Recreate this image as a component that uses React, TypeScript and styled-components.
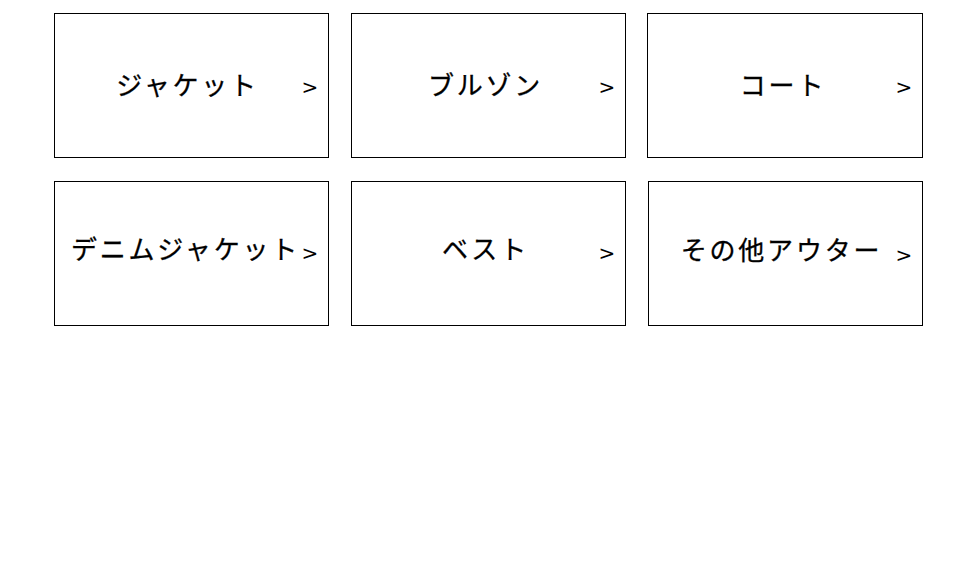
import React from "react";
import styled, { createGlobalStyle } from "styled-components";

const Global = createGlobalStyle`
  html, body { margin: 0; padding: 0; background: #fff; }
  body { font-family: "Noto Sans CJK JP", "Noto Sans", sans-serif; color: #000; }
`;

const Grid = styled.div`
  display: grid;
  grid-template-columns: repeat(3, 275px);
  grid-auto-rows: 145px;
  column-gap: 22px;
  row-gap: 23px;
  padding: 13px 0 0 54px;
`;

const Card = styled.a<{ $dx?: number }>`
  position: relative;
  display: flex;
  align-items: center;
  justify-content: center;
  box-sizing: border-box;
  border: 1px solid #000;
  background: #fff;
  color: #000;
  text-decoration: none;
  margin-left: ${(p) => p.$dx ?? 0}px;
`;

const Label = styled.span<{ $lift: number; $dx: number }>`
  font-family: "Noto Sans CJK JP", sans-serif;
  font-size: 26px;
  font-weight: 400;
  letter-spacing: 2.8px;
  line-height: 1;
  white-space: nowrap;
  -webkit-text-stroke: 0.3px #000;
  transform: translate(${(p) => p.$dx}px, ${(p) => -p.$lift}px);
`;

const Arrow = styled.span<{ $dy: number }>`
  position: absolute;
  right: 10px;
  top: 50%;
  transform: translateY(calc(-50% + ${(p) => p.$dy}px)) scaleX(1.05);
  font-family: "DejaVu Sans", sans-serif;
  font-size: 19px;
  line-height: 1;
`;

const items = [
  { label: "ジャケット", lift: 2, dx: -4, ady: 1, mx: 0 },
  { label: "ブルゾン", lift: 2, dx: -3, ady: 1, mx: 0 },
  { label: "コート", lift: 2, dx: -2, ady: 1, mx: -1 },
  { label: "デニムジャケット", lift: 6, dx: -6, ady: -1, mx: 0 },
  { label: "ベスト", lift: 6, dx: -3, ady: -1, mx: 0 },
  { label: "その他アウター", lift: 5, dx: -4, ady: 1, mx: 0 },
];

export default function App() {
  return (
    <>
      <Global />
      <Grid>
        {items.map((it) => (
          <Card key={it.label} href="#" $dx={it.mx}>
            <Label $lift={it.lift} $dx={it.dx}>
              {it.label}
            </Label>
            <Arrow $dy={it.ady}>&gt;</Arrow>
          </Card>
        ))}
      </Grid>
    </>
  );
}
